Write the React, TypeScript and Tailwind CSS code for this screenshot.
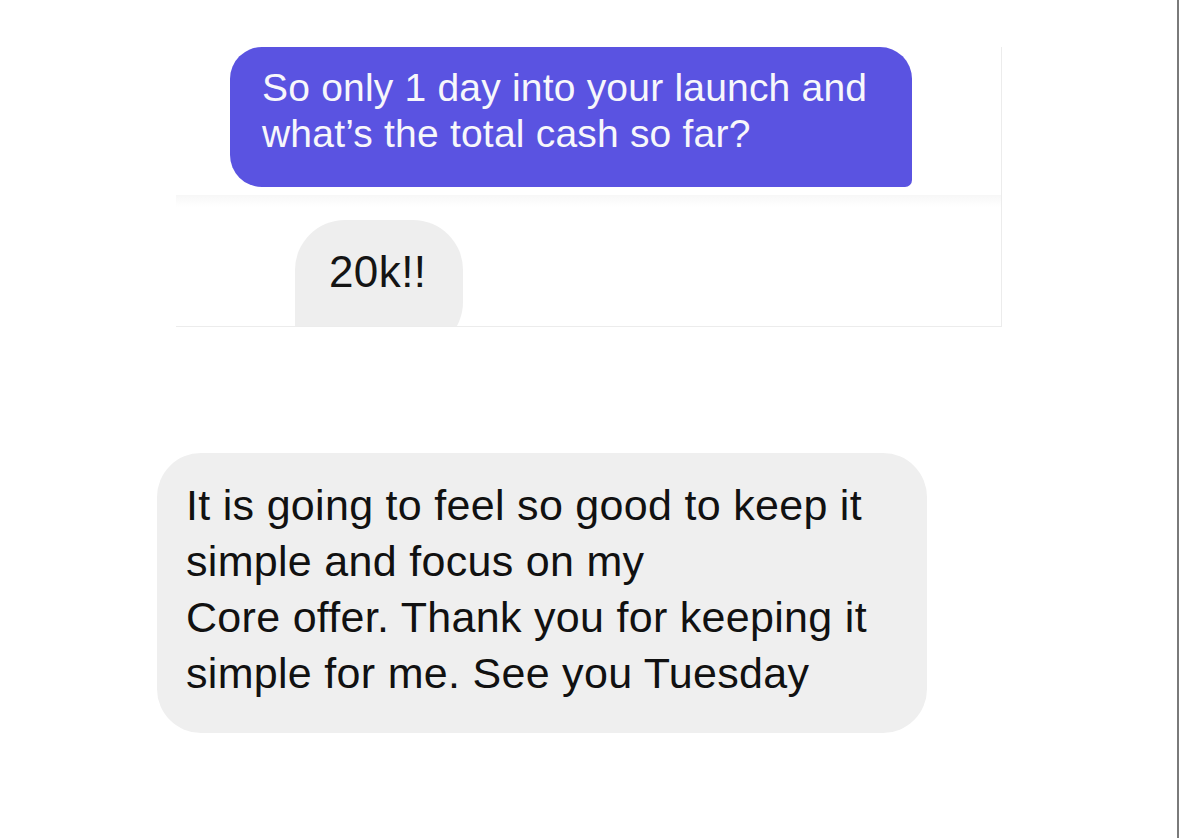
const font = { fontFamily: '"Liberation Sans", Arial, sans-serif' };

const App = () => {
  return (
    <div
      className="flex h-[838px] w-[1179px] flex-col overflow-hidden border-r-2 border-[#7a7a7a] bg-white"
      style={font}
    >
      {/* top screenshot panel */}
      <div className="ml-[176px] mt-[47px] flex h-[280px] w-[826px] flex-col overflow-hidden border-r border-b border-[#ececec] bg-white">
        <div className="ml-[54px] h-[140px] w-[682px] shrink-0 rounded-t-[32px] rounded-bl-[32px] rounded-br-[7px] bg-[#5a53e1] pl-[32px] pt-[18px] text-[39px] leading-[46px] tracking-[0.2px] text-[#f7f7fb]">
          <div>So only 1 day into your launch and</div>
          <div>what’s the total cash so far?</div>
        </div>
        <div className="mt-[8px] h-[12px] shrink-0 bg-gradient-to-b from-[#f7f7f7] to-white" />
        <div className="ml-[119px] mt-[13px] h-[132px] w-[168px] shrink-0 rounded-[50px] rounded-bl-[8px] bg-[#eeeeee] pl-[34px] pt-[27px] text-[44px] leading-[50px] tracking-[0.4px] text-[#141414]">
          20k!!
        </div>
      </div>

      {/* bottom bubble */}
      <div className="ml-[157px] mt-[126px] h-[280px] w-[770px] rounded-[44px] bg-[#efefef] pl-[29px] pt-[24px] text-[43px] leading-[56px] tracking-[0.3px] text-[#111111]">
        <div>It is going to feel so good to keep it</div>
        <div>simple and focus on my</div>
        <div>Core offer. Thank you for keeping it</div>
        <div>simple for me. See you Tuesday</div>
      </div>
    </div>
  );
};

export default App;
